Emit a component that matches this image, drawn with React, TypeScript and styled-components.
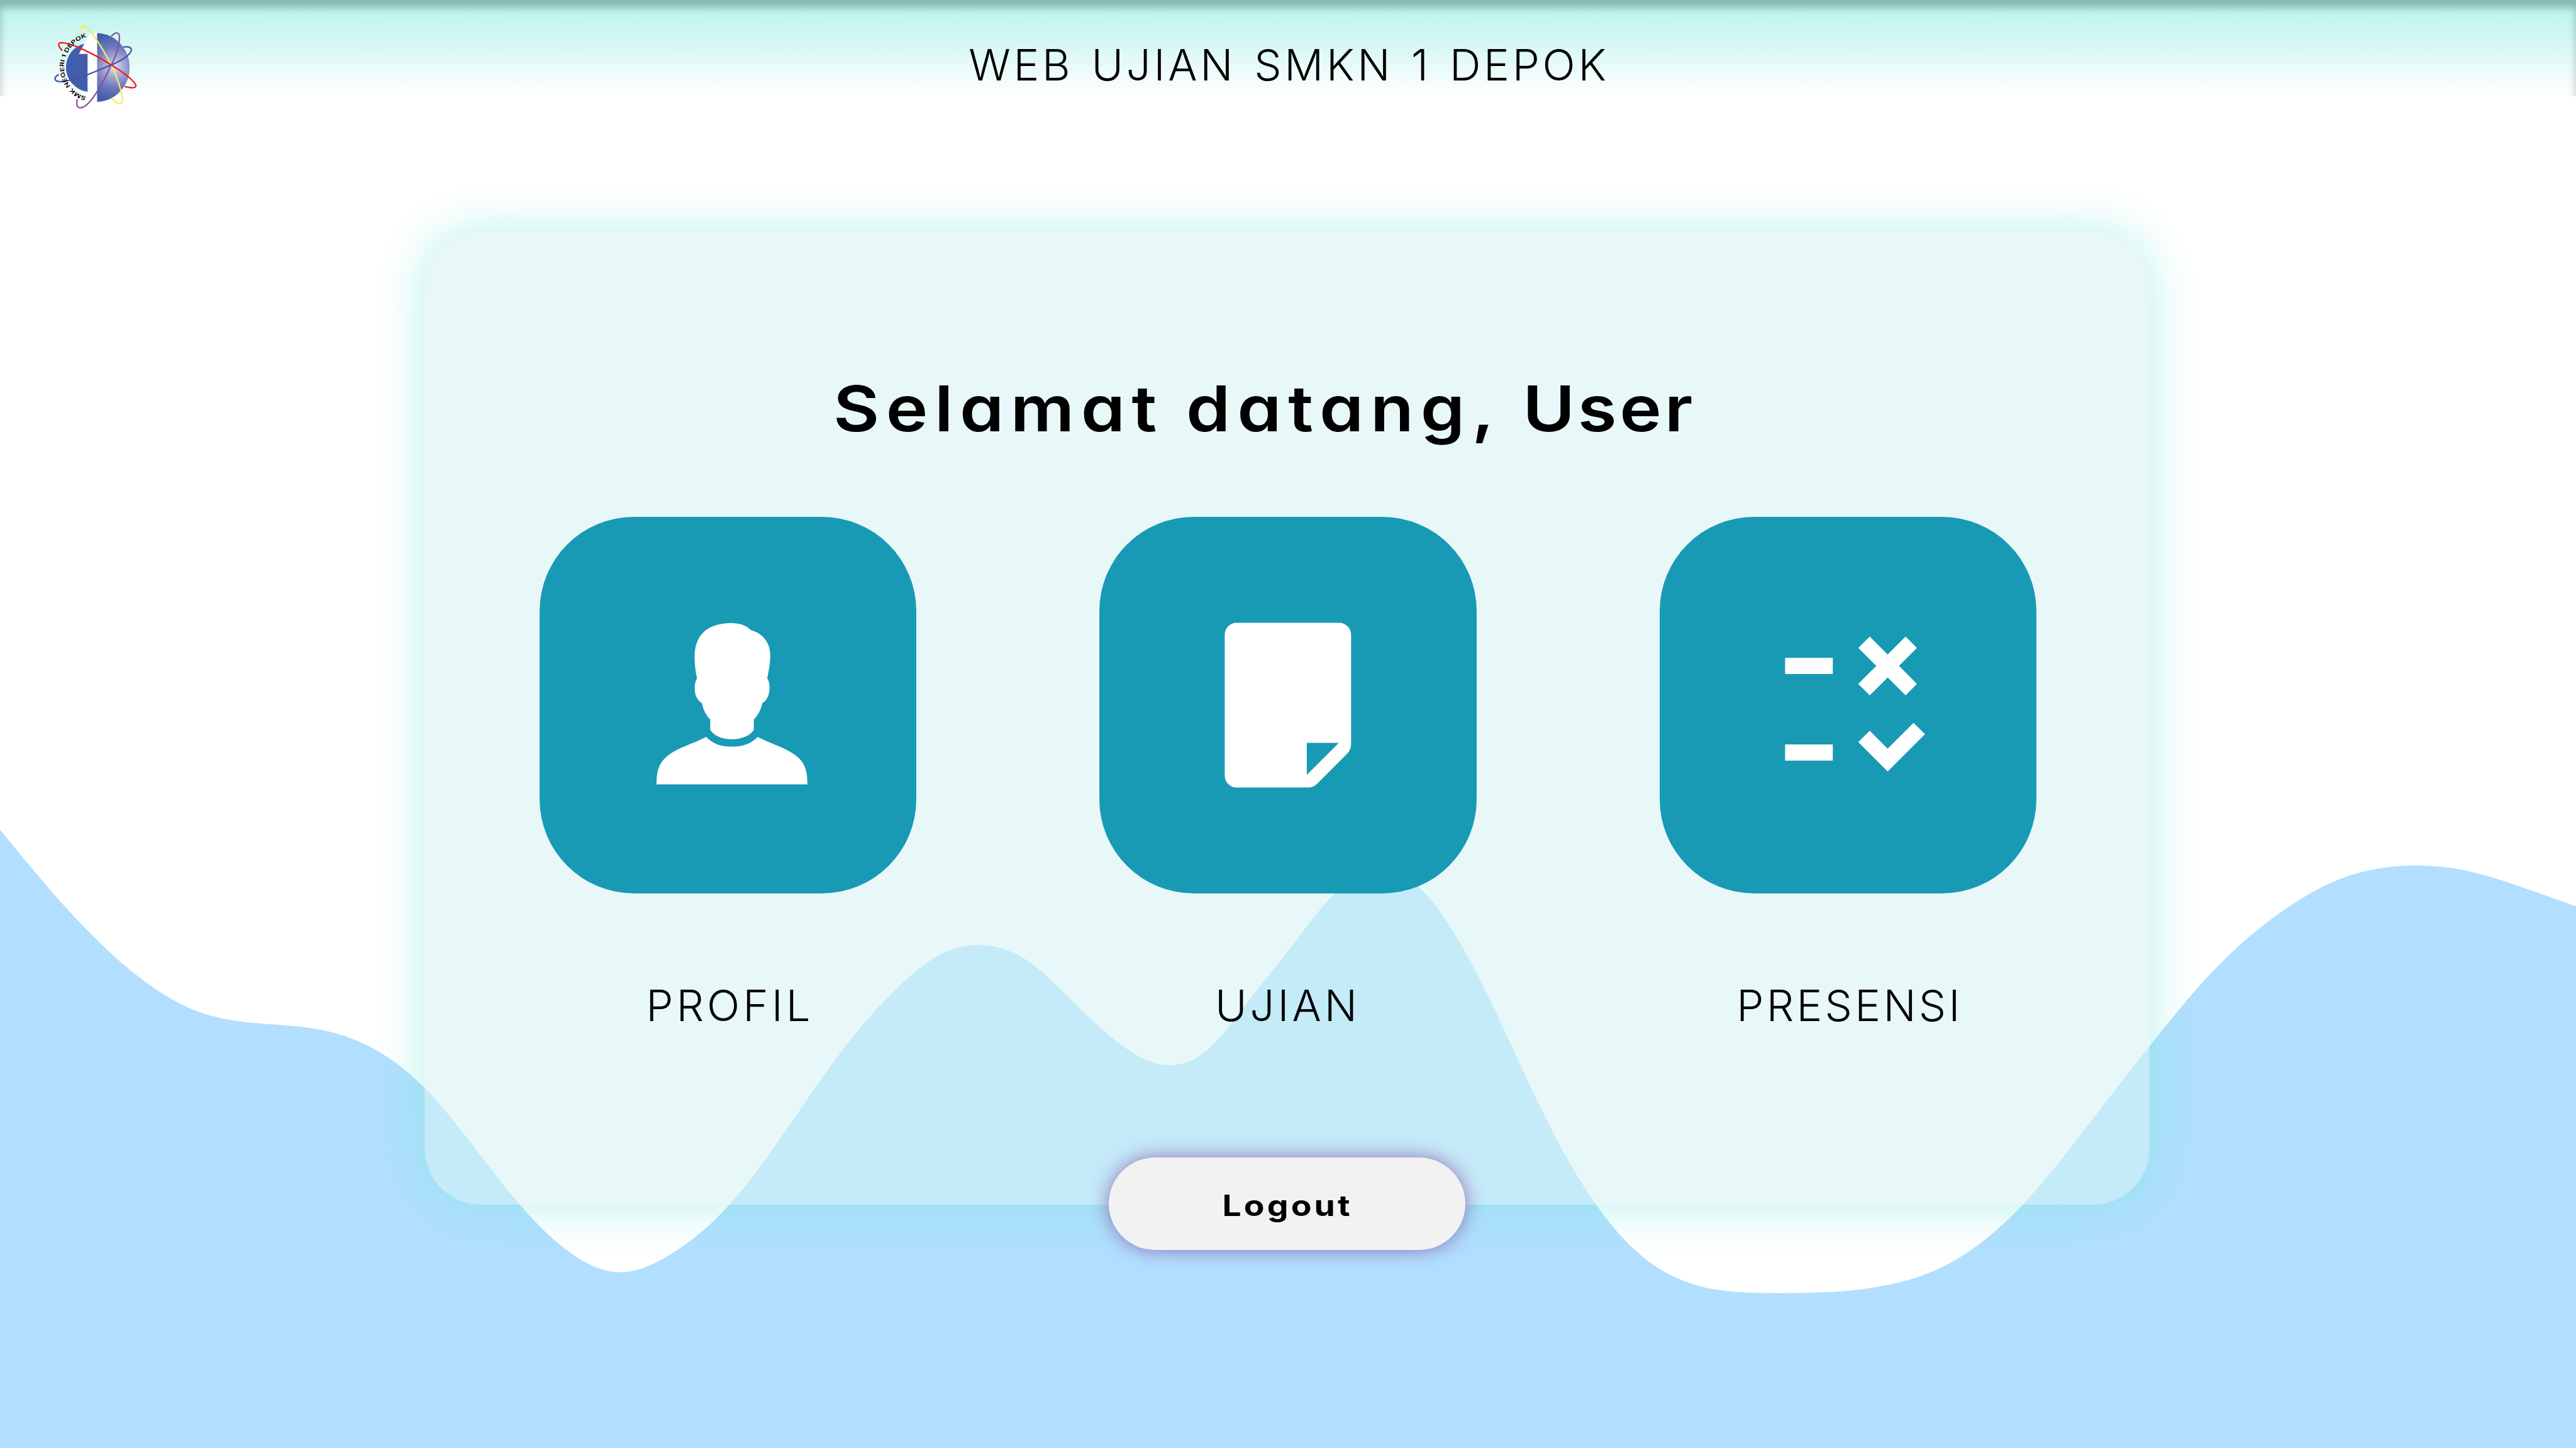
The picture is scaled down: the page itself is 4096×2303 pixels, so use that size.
import React from "react";
import styled, { createGlobalStyle } from "styled-components";

/* The design frame is 1366 units wide; u() turns frame units into pixels. */
const SCALE = 4096 / 1366;
const u = (n: number) => `${+(n * SCALE).toFixed(3)}px`;

const GlobalStyle = createGlobalStyle`
  *, *::before, *::after { box-sizing: border-box; }
  html, body { margin: 0; padding: 0; background: #ffffff; }
  body { font-family: "Inter", "Open Sans", sans-serif; color: #000; overflow: hidden; }
`;

const Page = styled.div`
  position: relative;
  width: 4096px;
  height: 2303px;
  overflow: hidden;
  background: #ffffff;
  display: flex;
  flex-direction: column;
`;

const WaveSvg = styled.svg`
  position: absolute;
  inset: 0;
  width: 100%;
  height: 100%;
`;

const Header = styled.header`
  position: relative;
  height: ${u(51)};
  flex: none;
  display: grid;
  grid-template-columns: 1fr auto 1fr;
  align-items: start;
  padding: 0 ${u(20)};
  background: linear-gradient(180deg, rgba(117, 230, 218, 0.54) 0%, rgba(255, 255, 255, 0.54) 100%);
  box-shadow: inset 0 ${u(4)} ${u(4)} rgba(0, 0, 0, 0.25);
`;

const LogoSvg = styled.svg`
  width: ${u(60)};
  height: ${u(55)};
  margin-top: ${u(7.5)};
  overflow: visible;
`;

const SiteTitle = styled.div`
  padding: ${u(17.7)} 0 0 3px;
  font-weight: 300;
  font-size: ${u(22.94)};
  line-height: ${u(34)};
  letter-spacing: 4.7px;
  word-spacing: 5px;
  white-space: nowrap;
`;

const Main = styled.main`
  position: relative;
  display: flex;
  margin-top: ${u(72)};
  padding-left: ${u(225)};
`;

const Panel = styled.section`
  width: ${u(915)};
  height: ${u(516)};
  display: flex;
  flex-direction: column;
  align-items: center;
  padding-top: ${u(68.7)};
  border-radius: ${u(30)};
  background: rgba(213, 242, 242, 0.55);
  box-shadow: 0 0 ${u(25)} ${u(2)} rgba(117, 230, 218, 0.46);
`;

const Greeting = styled.h1`
  align-self: flex-start;
  margin: 0 0 ${u(32.3)} ${u(217)};
  font-weight: 600;
  font-size: ${u(33.55)};
  line-height: ${u(50)};
  word-spacing: -2.5px;
  font-feature-settings: "cv11";
  white-space: nowrap;
  transform: scaleX(1.12);
  transform-origin: left center;
`;

const Word = styled.span<{ $spacing: number }>`
  letter-spacing: ${(p) => p.$spacing}px;
`;

const Menu = styled.nav`
  display: flex;
  align-self: flex-start;
  gap: ${u(97)};
  margin-left: ${u(61)};
`;

const MenuItem = styled.a`
  width: ${u(200)};
  display: flex;
  flex-direction: column;
  align-items: center;
  color: inherit;
  text-decoration: none;
`;

const Tile = styled.span`
  width: ${u(200)};
  height: ${u(200)};
  display: flex;
  border-radius: ${u(50)};
  background: #189ab4;
  overflow: hidden;
`;

const TileIcon = styled.svg`
  width: 100%;
  height: 100%;
  fill: #ffffff;
`;

const Label = styled.span<{ $spacing: number; $shift: number }>`
  margin-top: ${u(42.6)};
  margin-left: ${(p) => p.$shift}px;
  font-weight: 300;
  font-size: ${u(22.94)};
  line-height: ${u(34)};
  letter-spacing: ${(p) => p.$spacing}px;
  white-space: nowrap;
`;

const LogoutButton = styled.button`
  flex: none;
  width: ${u(189)};
  height: ${u(49)};
  margin-top: ${u(63.4)};
  padding: ${u(1.4)} 0 0 2px;
  border: 0;
  border-radius: ${u(25)};
  background: #f2f2f2;
  box-shadow: 0 0 ${u(10)} rgba(128, 88, 160, 0.8);
  color: #000;
  font-family: inherit;
  font-weight: 700;
  font-size: ${u(15.5)};
  letter-spacing: 3.6px;
`;

const LogoutText = styled.span`
  display: inline-block;
  transform: scaleX(1.15);
`;

type Point = [number, number];

/* Samples of the wave's upper edge, in quarter frame units (5464 x 3072). */
const WAVE: Point[] = [
  [0, 1760], [143, 1929], [295, 2073], [420, 2146], [536, 2170], [643, 2179],
  [750, 2205], [900, 2307.5], [1102, 2555], [1200, 2650.5], [1318, 2699],
  [1420, 2662.5], [1548, 2555], [1696, 2356], [1804, 2206], [1911, 2089],
  [1982, 2032], [2075, 2005], [2179, 2038], [2280, 2129], [2385, 2222], [2482, 2260],
  [2566, 2223], [2647, 2125], [2739, 2009], [2830, 1896], [2922, 1846],
  [3009, 1881], [3084, 1979], [3183, 2169], [3280, 2375], [3385, 2555],
  [3468, 2652], [3557, 2711.5], [3646, 2737], [3735, 2743], [3825, 2743],
  [3914, 2739], [3994, 2728], [4093, 2700], [4200, 2638], [4291, 2555],
  [4468, 2336], [4560, 2219], [4664, 2093], [4762, 1995], [4860, 1920],
  [4968, 1863], [5048, 1842], [5128, 1836], [5218, 1844.5], [5343, 1880], [5464, 1923],
];

/* Natural cubic spline through the samples, written out as Bezier segments. */
function splinePath(pts: Point[]): string {
  const n = pts.length;
  const h = pts.slice(1).map((p, i) => p[0] - pts[i][0]);
  const s = pts.slice(1).map((p, i) => (p[1] - pts[i][1]) / h[i]);
  const c: number[] = new Array(n).fill(0);
  const d: number[] = new Array(n).fill(0);
  for (let i = 1; i < n - 1; i++) {
    const m = 2 * (h[i - 1] + h[i]) - h[i - 1] * c[i - 1];
    c[i] = h[i] / m;
    d[i] = (6 * (s[i] - s[i - 1]) - h[i - 1] * d[i - 1]) / m;
  }
  const k: number[] = new Array(n).fill(0);
  for (let i = n - 2; i > 0; i--) k[i] = d[i] - c[i] * k[i + 1];

  let path = `M${pts[0][0]},${pts[0][1]}`;
  for (let i = 0; i < n - 1; i++) {
    const [x0, y0] = pts[i];
    const [x1, y1] = pts[i + 1];
    const t = h[i] / 3;
    const m0 = s[i] - (h[i] * (2 * k[i] + k[i + 1])) / 6;
    const m1 = s[i] + (h[i] * (k[i] + 2 * k[i + 1])) / 6;
    const nums = [x0 + t, y0 + m0 * t, x1 - t, y1 - m1 * t, x1, y1].map((v) => v.toFixed(2));
    path += `C${nums.join(" ")}`;
  }
  return path;
}

const wavePath = `${splinePath(WAVE)}V3072H0Z`;

function Waves() {
  return (
    <WaveSvg viewBox="0 0 5464 3072" preserveAspectRatio="none" aria-hidden="true">
      <path d={wavePath} fill="#b2dfff" />
    </WaveSvg>
  );
}

function Logo() {
  return (
    <LogoSvg viewBox="0 0 720 660" role="img" aria-label="SMK Negeri 1 Depok">
      <defs>
        <radialGradient id="globe" gradientUnits="userSpaceOnUse" cx="488" cy="338" r="215">
          <stop offset="0" stopColor="#e2e0f1" />
          <stop offset="0.25" stopColor="#adaed8" />
          <stop offset="0.6" stopColor="#6f7abb" />
          <stop offset="1" stopColor="#415dab" />
        </radialGradient>
        <path id="ring" d="M309,529 A198,198 0 0 1 326,145" />
      </defs>
      <path d="M318,496 C240,486 180,420 180,341 C180,265 232,204 298,190 L318,196 Z" fill="#415dab" />
      <path d="M332,123 H378 V560 H318 V255 H262 Z" fill="#ffffff" />
      <path d="M378,123 C492,124 585,222 585,341 C585,460 492,558 378,560 Z" fill="url(#globe)" />
      <g fill="none" strokeWidth="9">
        <path d="M545,212 C580,206 598,215 596,232 C588,262 535,298 467,325 C385,360 250,422 150,432 C100,432 98,405 135,386" stroke="#444fa3" />
        <path d="M467,143 C495,115 520,110 520,152 C521,200 500,262 467,325 C420,432 335,590 275,598 C245,600 246,570 252,543" stroke="#8551a3" />
        <path d="M270,132 C264,96 274,78 290,78 C325,80 402,198 467,325 C520,430 546,538 537,563 C527,586 495,565 470,535" stroke="#f6ee55" />
        <path d="M157,234 C128,205 125,184 150,184 C220,186 370,262 467,325 C560,380 622,435 625,458 C622,478 590,470 553,463" stroke="#ee1c27" />
        <path d="M490,316 C482,319 475,322 467,325 C459,328 450,332 441,336" stroke="#444fa3" />
      </g>
      <text fontFamily="Inter, sans-serif" fontSize="36" fontWeight="600" fill="#000">
        <textPath href="#ring" textLength="512" lengthAdjust="spacingAndGlyphs">SMK NEGERI 1 DEPOK</textPath>
      </text>
    </LogoSvg>
  );
}

function ProfileIcon() {
  return (
    <TileIcon viewBox="0 0 200 200">
      <path d="M101.7,56.4 C105.8,56.4 109.5,57.5 112.1,60.1 C118,61.6 122.3,66.5 122.3,73.5 C122.3,78 121.5,81.5 120.7,85.8 C122.3,87.5 122.3,93 121,95.5 C120.2,97.2 119.4,98.2 118.2,98.7 C117.2,102.5 115.8,105.4 113.6,107.5 V113 C111.5,116.2 107.2,118 101.9,118 C96.6,118 92.6,116.2 90.5,113 V107.5 C88.3,105.4 86.8,102.3 86,98.7 C84.6,98 83.6,96.7 82.9,95 C81.9,92.5 82.1,87.5 83.5,85.8 C82.6,82 82.2,78 82.2,74 C82.2,62 90,56.4 101.7,56.4 Z" />
      <path d="M62,141.9 C62,136 62.8,132 66,128.5 C71,123 80,121 88.4,116.7 C91.5,120.2 96,121.9 101.9,121.9 C107.8,121.9 112.5,120.2 115.6,116.7 C124,121 133,123.2 138,128.5 C141.2,132 142,136 142,141.9 Z" />
    </TileIcon>
  );
}

function PaperIcon() {
  return (
    <TileIcon viewBox="0 0 200 200">
      <path
        fillRule="evenodd"
        d="M72.8,56.2 H127.2 A6.3,6.3 0 0 1 133.5,62.5 V120.5 C133.5,122.5 132.9,124.2 131.5,125.6 L115.6,141.5 C114.2,142.9 112.6,143.6 110.6,143.6 H72.8 A6.3,6.3 0 0 1 66.5,137.3 V62.5 A6.3,6.3 0 0 1 72.8,56.2 Z M110,119.9 V136.9 L127,119.9 Z"
      />
    </TileIcon>
  );
}

function RuleIcon() {
  return (
    <TileIcon viewBox="0 0 200 200">
      <path d="M66.5,74.8 H91.8 V83.4 H66.5 Z M66.5,120.7 H91.8 V129.3 H66.5 Z" />
      <path d="M111.4,63.5 L120.9,73 L130.4,63.5 L136.4,69.5 L126.9,79 L136.4,88.6 L130.4,94.7 L120.9,85.2 L111.4,94.7 L105.3,88.6 L114.9,79 L105.3,69.5 Z" />
      <path d="M111.4,113.5 L120.9,123 L134.6,109.3 L140.7,115.3 L120.9,135.1 L105.3,119.5 Z" />
    </TileIcon>
  );
}

const MENU = [
  { label: "PROFIL", spacing: 5, shift: 6, Icon: ProfileIcon },
  { label: "UJIAN", spacing: 5, shift: -1, Icon: PaperIcon },
  { label: "PRESENSI", spacing: 4.2, shift: 5, Icon: RuleIcon },
];

export default function App() {
  return (
    <>
      <GlobalStyle />
      <Page>
        <Waves />
        <Header>
          <Logo />
          <SiteTitle>WEB UJIAN SMKN 1 DEPOK</SiteTitle>
        </Header>
        <Main>
          <Panel>
            <Greeting>
              <Word $spacing={9.4}>Selamat </Word>
              <Word $spacing={9.7}>datang, </Word>
              <Word $spacing={4.2}>User</Word>
            </Greeting>
            <Menu>
              {MENU.map(({ label, spacing, shift, Icon }) => (
                <MenuItem key={label} href="#">
                  <Tile>
                    <Icon />
                  </Tile>
                  <Label $spacing={spacing} $shift={shift}>
                    {label}
                  </Label>
                </MenuItem>
              ))}
            </Menu>
            <LogoutButton type="button">
              <LogoutText>Logout</LogoutText>
            </LogoutButton>
          </Panel>
        </Main>
      </Page>
    </>
  );
}
